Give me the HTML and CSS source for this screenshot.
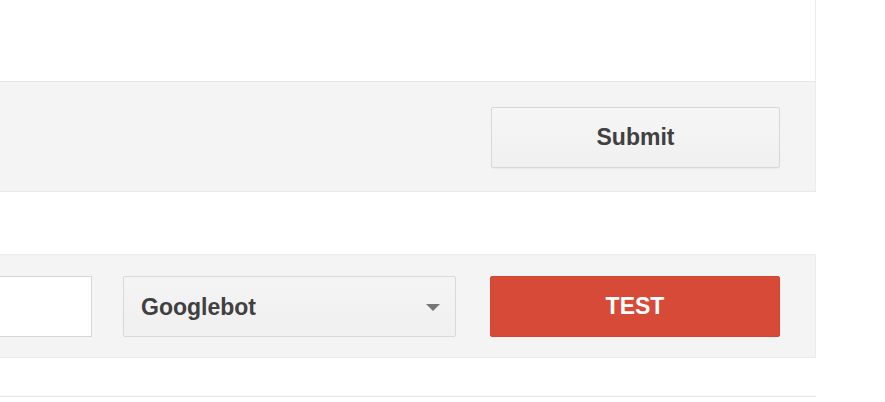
FILE: index.html
```html
<!DOCTYPE html>
<html>
<head>
<meta charset="utf-8">
<link rel="stylesheet" href="styles.css">
</head>
<body>
<div class="page">
  <div class="editor"></div>
  <div class="editor-footer">
    <button class="btn btn-submit">Submit</button>
  </div>
  <div class="spacer"></div>
  <div class="test-bar">
    <div class="url-input"></div>
    <div class="agent-select">
      <span class="agent-label">Googlebot</span>
      <svg class="caret" width="14" height="8" viewBox="0 0 14 8"><path d="M0 0 H14 L7 7 Z" fill="#777"/></svg>
    </div>
    <button class="btn btn-test">TEST</button>
  </div>
  <div class="results"></div>
</div>
</body>
</html>
```
FILE: styles.css
```css
html, body {
  margin: 0;
  padding: 0;
  background: #ffffff;
  overflow: hidden;
}
.page {
  width: 816px;
  display: flex;
  flex-direction: column;
  font-family: "Liberation Sans", Arial, sans-serif;
}
.editor {
  height: 81px;
  background: #ffffff;
  border-right: 1px solid #ececec;
  border-bottom: 1px solid #e6e6e6;
}
.editor-footer {
  height: 110px;
  box-sizing: border-box;
  background: #f4f4f4;
  border-right: 1px solid #ececec;
  border-bottom: 1px solid #e9e9e9;
  display: flex;
  justify-content: flex-end;
  align-items: flex-start;
  padding: 25px 35px 0 0;
}
.btn {
  font-family: "Liberation Sans", Arial, sans-serif;
  font-weight: bold;
  font-size: 23px;
  border-radius: 2px;
  height: 61px;
  padding: 0;
  cursor: pointer;
}
.btn-submit {
  width: 289px;
  background: linear-gradient(#f6f6f6, #f0f0f0);
  border: 1px solid #d8d8d8;
  color: #404040;
  box-shadow: 0 1px 1px rgba(0,0,0,0.04);
}
.spacer {
  height: 62px;
}
.test-bar {
  height: 104px;
  box-sizing: border-box;
  background: #f4f4f4;
  border-top: 1px solid #ececec;
  border-right: 1px solid #ececec;
  border-bottom: 1px solid #e9e9e9;
  display: flex;
  align-items: flex-start;
  padding: 21px 35px 0 0;
}
.url-input {
  flex: 1;
  min-width: 0;
  height: 61px;
  box-sizing: border-box;
  background: #ffffff;
  border: 1px solid #d6d6d6;
  border-left: none;
  margin-right: 31px;
}
.agent-select {
  width: 333px;
  height: 61px;
  box-sizing: border-box;
  background: linear-gradient(#f4f4f4, #f0f0f0);
  border: 1px solid #d9d9d9;
  border-radius: 2px;
  display: flex;
  align-items: center;
  justify-content: space-between;
  padding: 2px 15px 0 17px;
  margin-right: 34px;
}
.agent-label {
  font-weight: bold;
  font-size: 23px;
  color: #404040;
}
.caret {
  display: block;
}
.btn-test {
  width: 290px;
  background: #d74a38;
  border: 1px solid #d24634;
  color: #ffffff;
}
.results {
  height: 38px;
  border-bottom: 1px solid #e6e6e6;
}
```
